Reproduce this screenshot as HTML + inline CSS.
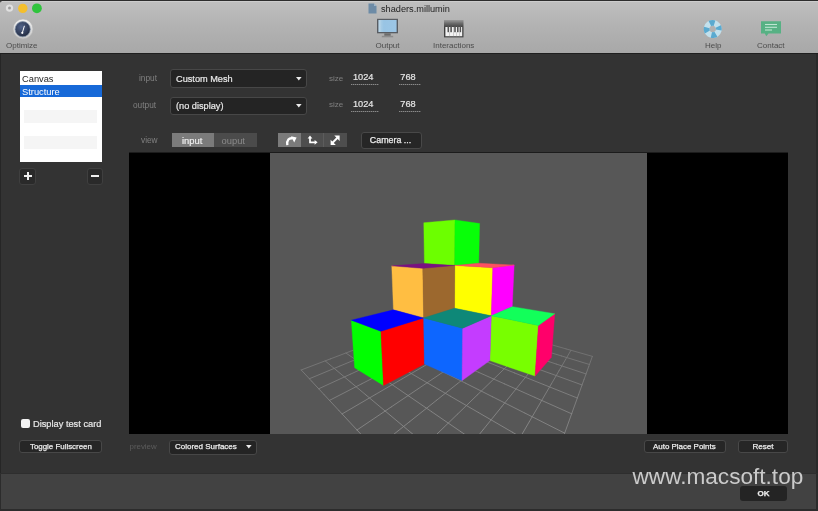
<!DOCTYPE html>
<html><head><meta charset="utf-8">
<style>
*{box-sizing:border-box;margin:0;padding:0}
html,body{width:818px;height:511px;overflow:hidden;background:#2a2a2a;font-family:"Liberation Sans",sans-serif}
.abs{position:absolute}
#win{position:absolute;left:0;top:0;width:818px;height:511px;background:#333333;overflow:hidden;filter:blur(0.35px)}
#tb{position:absolute;left:0;top:0;width:818px;height:53px;background:linear-gradient(#bfbfbf,#b3b3b3 45%,#a8a8a8);border-top:1px solid #2c2c2c;border-radius:3px 0 0 0}
#tbhi{position:absolute;left:2px;top:1px;width:816px;height:1px;background:#cccccc}
#tbline{position:absolute;left:0;top:53px;width:818px;height:1px;background:#1f1f1f}
.tl{position:absolute;top:3.5px;width:9px;height:9px;border-radius:50%}
.t{position:absolute;white-space:nowrap;line-height:1}
.tlabel{position:absolute;top:42px;font-size:8px;color:#4c4c4c;white-space:nowrap;line-height:1}
.lbl{position:absolute;font-size:8.3px;color:#808080;white-space:nowrap;line-height:1}
.sel{position:absolute;background:#242424;border:1px solid #474747;border-radius:3px}
.btn{position:absolute;background:#262626;border:1px solid #484848;border-radius:3px}
.btxt{position:absolute;color:#ececec;white-space:nowrap;line-height:1;-webkit-text-stroke:0.25px #ececec}
.w{-webkit-text-stroke:0.2px #e8e8e8}
.num{position:absolute;font-size:9.2px;color:#e6e6e6;white-space:nowrap;line-height:1;-webkit-text-stroke:0.2px #e6e6e6}
.ul{position:absolute;height:1px;background:repeating-linear-gradient(90deg,#8a8a8a 0 1px,#555 1px 2px)}
.arr{position:absolute;width:0;height:0;border-left:2.8px solid transparent;border-right:2.8px solid transparent;border-top:3px solid #e8e8e8}
</style></head><body>
<div id="win">
  <div id="tb"></div>
  <div id="tbhi"></div>
  <div id="tbline"></div>
  <!-- traffic lights -->
  <svg class="abs" style="left:0;top:0" width="48" height="16" viewBox="0 0 48 16">
    <circle cx="9.5" cy="8.1" r="3.7" fill="#e0e0e0"/>
    <circle cx="9.5" cy="8.1" r="1.5" fill="#9c9c9c"/>
    <circle cx="22.8" cy="8.4" r="4.7" fill="#f4bf2c"/>
    <circle cx="36.9" cy="8.3" r="4.9" fill="#2fc43d"/>
  </svg>
  <!-- title -->
  <svg class="abs" style="left:368px;top:3px" width="9" height="11" viewBox="0 0 9 11"><path d="M0.5 0.5H6L8.5 3V10.5H0.5Z" fill="#6d8ba6"/><path d="M6 0.5V3H8.5" fill="#9fb6c9"/></svg>
  <div class="t" style="left:381px;top:5px;font-size:9.2px;color:#1e1e1e">shaders.millumin</div>

  <!-- Optimize icon -->
  <svg class="abs" style="left:11.5px;top:17.5px" width="22" height="22" viewBox="0 0 22 22">
    <defs><radialGradient id="og" cx="0.4" cy="0.35" r="0.75"><stop offset="0" stop-color="#52648a"/><stop offset="0.6" stop-color="#323e5a"/><stop offset="1" stop-color="#1e2536"/></radialGradient>
    <linearGradient id="ring" x1="0" y1="0" x2="0" y2="1"><stop offset="0" stop-color="#f0f0f0"/><stop offset="1" stop-color="#c8c8c8"/></linearGradient></defs>
    <circle cx="11" cy="11" r="10" fill="url(#ring)" stroke="#b4b4b4" stroke-width="0.6"/>
    <circle cx="10.7" cy="11.2" r="7.6" fill="url(#og)" stroke="#8090a8" stroke-width="0.7"/>
    <path d="M10.3 14.9L12.3 8.2" stroke="#ffffff" stroke-width="1" stroke-linecap="round"/>
    <circle cx="10.3" cy="14.8" r="1.1" fill="#fff"/>
  </svg>
  <div class="tlabel" style="left:6px">Optimize</div>

  <!-- Output icon -->
  <svg class="abs" style="left:376px;top:18px" width="23" height="21" viewBox="0 0 23 21">
    <defs><linearGradient id="scr" x1="0" y1="0" x2="1" y2="0"><stop offset="0" stop-color="#b4d2e6"/><stop offset="0.3" stop-color="#98c4e4"/><stop offset="1" stop-color="#9cc6e6"/></linearGradient></defs>
    <rect x="1" y="0.8" width="21" height="14.5" fill="#585c62"/>
    <rect x="2.4" y="2" width="18.2" height="12" fill="url(#scr)"/>
    <rect x="3.6" y="2" width="0.6" height="12" fill="#c4dcea"/>
    <rect x="8.3" y="15.3" width="6.4" height="2.5" fill="#6c6c6c"/>
    <rect x="5.8" y="17.8" width="11.4" height="1.5" fill="#8c8c8c"/>
  </svg>
  <div class="tlabel" style="left:375.5px">Output</div>

  <!-- Interactions icon -->
  <svg class="abs" style="left:444.3px;top:20.2px" width="20" height="18" viewBox="0 0 20 18">
    <defs><linearGradient id="pg" x1="0" y1="0" x2="0" y2="1"><stop offset="0" stop-color="#9a9a9a"/><stop offset="0.2" stop-color="#6a6a6a"/><stop offset="0.45" stop-color="#3c3c3c"/><stop offset="1" stop-color="#444"/></linearGradient></defs>
    <rect x="0" y="0" width="19.5" height="17.4" fill="url(#pg)"/>
    <rect x="1.4" y="7" width="16.8" height="9.2" fill="#f2f2f2"/>
    <g fill="#555"><rect x="3.5" y="6" width="1.6" height="6.2"/><rect x="6.3" y="6" width="1.6" height="6.2"/><rect x="10.2" y="6" width="1.6" height="6.2"/><rect x="13" y="6" width="1.6" height="6.2"/><rect x="15.6" y="6" width="1.5" height="6.2"/></g>
    <g fill="#aaa"><rect x="5.4" y="12.2" width="0.5" height="4"/><rect x="9.1" y="7" width="0.5" height="9.2"/><rect x="12.5" y="12.2" width="0.5" height="4"/><rect x="15.2" y="12.2" width="0.5" height="4"/></g>
  </svg>
  <div class="tlabel" style="left:433px">Interactions</div>

  <!-- Help icon -->
  <svg class="abs" style="left:703px;top:18.5px" width="20" height="20" viewBox="0 0 20 20">
    <g transform="rotate(-12 9.7 10)">
    <circle cx="9.7" cy="10" r="6.1" fill="none" stroke="#c2e0ec" stroke-width="5.8"/>
    <circle cx="9.7" cy="10" r="6.1" fill="none" stroke="#5aaad0" stroke-width="5.8" stroke-dasharray="4.79 4.79" stroke-dashoffset="2.4"/>
    </g>
  </svg>
  <div class="tlabel" style="left:705px">Help</div>

  <!-- Contact icon -->
  <svg class="abs" style="left:760px;top:20px" width="22" height="18" viewBox="0 0 22 18">
    <path d="M1 1.2H21V13.5H8.5L6.3 16.3L4.8 13.5H1Z" fill="#57b184"/>
    <g stroke="#bfe6d2" stroke-width="1.1"><path d="M5 4.5H17"/><path d="M5 7.3H17"/><path d="M5 10H12"/></g>
  </svg>
  <div class="tlabel" style="left:757px">Contact</div>

  <!-- right/left window edges -->
  <div class="abs" style="left:0;top:54px;width:1px;height:457px;background:#262626"></div>
  <div class="abs" style="left:816px;top:54px;width:2px;height:457px;background:#2a2a2a"></div>

  <!-- listbox -->
  <div class="abs" style="left:20px;top:71px;width:82px;height:91px;background:#fff"></div>
  <div class="abs" style="left:20px;top:97px;width:82px;height:13px;background:#fff"></div>
  <div class="abs" style="left:24px;top:110px;width:73px;height:12.5px;background:#f5f5f5"></div>
  <div class="abs" style="left:24px;top:136px;width:73px;height:12.5px;background:#f5f5f5"></div>
  <div class="abs" style="left:20px;top:84.5px;width:82px;height:12.5px;background:#1769d8"></div>
  <div class="t" style="left:22px;top:75px;font-size:9.3px;color:#262626">Canvas</div>
  <div class="t" style="left:22px;top:88px;font-size:9.3px;color:#fff">Structure</div>

  <!-- + - buttons -->
  <div class="btn" style="left:19px;top:167.5px;width:17px;height:17px;background:#2a2a2a;border-color:#3f3f3f"></div>
  <div class="abs" style="left:24px;top:175px;width:8px;height:2.2px;background:#f0f0f0"></div>
  <div class="abs" style="left:26.9px;top:172px;width:2.2px;height:8px;background:#f0f0f0"></div>
  <div class="btn" style="left:87px;top:167.5px;width:16px;height:17px;background:#2a2a2a;border-color:#3f3f3f"></div>
  <div class="abs" style="left:90.5px;top:174.5px;width:8px;height:2.2px;background:#f0f0f0"></div>

  <!-- input/output -->
  <div class="lbl" style="left:139px;top:74px">input</div>
  <div class="lbl" style="left:133px;top:101px">output</div>
  <div class="sel" style="left:170px;top:69px;width:137px;height:19px"></div>
  <div class="t w" style="left:176px;top:75px;font-size:9.2px;color:#eaeaea">Custom Mesh</div>
  <svg class="abs" style="left:295.9px;top:76.9px" width="7" height="5" viewBox="0 0 7 5"><path d="M0 0H5.6L2.8 3.4Z" fill="#ececec"/></svg>
  <div class="sel" style="left:170px;top:96.5px;width:137px;height:18.5px"></div>
  <div class="t w" style="left:176px;top:102px;font-size:9.2px;color:#eaeaea">(no display)</div>
  <svg class="abs" style="left:295.9px;top:104.0px" width="7" height="5" viewBox="0 0 7 5"><path d="M0 0H5.6L2.8 3.4Z" fill="#ececec"/></svg>

  <div class="lbl" style="left:329px;top:74.5px;font-size:8px">size</div>
  <div class="lbl" style="left:329px;top:101px;font-size:8px">size</div>
  <div class="num" style="left:353px;top:73.3px">1024</div>
  <div class="num" style="left:400.3px;top:73.3px">768</div>
  <div class="num" style="left:353px;top:99.5px">1024</div>
  <div class="num" style="left:400.3px;top:99.5px">768</div>
  <div class="ul" style="left:351px;top:84px;width:28px"></div>
  <div class="ul" style="left:399px;top:84px;width:22px"></div>
  <div class="ul" style="left:351px;top:110.5px;width:28px"></div>
  <div class="ul" style="left:399px;top:110.5px;width:22px"></div>

  <!-- view row -->
  <div class="lbl" style="left:141px;top:135.5px">view</div>
  <div class="abs" style="left:172px;top:133px;width:42px;height:14px;background:#7b7b7b"></div>
  <div class="abs" style="left:214px;top:133px;width:42.5px;height:14px;background:#4b4b4b"></div>
  <div class="t w" style="left:182px;top:136px;font-size:9.4px;color:#f4f4f4">input</div>
  <div class="t" style="left:221.5px;top:136px;font-size:9.4px;color:#8a8a8a">ouput</div>

  <div class="abs" style="left:278px;top:133px;width:23px;height:14px;background:#7b7b7b"></div>
  <div class="abs" style="left:301px;top:133px;width:46px;height:14px;background:#4e4e4e"></div>
  <div class="abs" style="left:322.5px;top:133px;width:0.6px;height:14px;background:#5c5c5c"></div>
  <svg class="abs" style="left:278px;top:133px" width="69" height="14" viewBox="0 0 69 14">
    <path d="M9.3 12.2C8.6 7 11 4.6 14.8 5.4" fill="none" stroke="#fff" stroke-width="2.3"/>
    <path d="M13 3.2L18.6 4.6L16.2 9.4Z" fill="#fff"/>
    <path d="M32 4V9.3H37" fill="none" stroke="#fff" stroke-width="1.7"/>
    <path d="M29.6 5.4L32 2.4L34.4 5.4Z" fill="#fff"/>
    <path d="M36.6 6.9L39.6 9.3L36.6 11.7Z" fill="#fff"/>
    <path d="M54.5 9.8L59.5 4.8" stroke="#fff" stroke-width="2"/>
    <path d="M56.3 2.6H61.6V7.9Z" fill="#fff"/>
    <path d="M52.6 6.8V12H57.8Z" fill="#fff"/>
  </svg>

  <div class="btn" style="left:360.5px;top:131.5px;width:61px;height:17px"></div>
  <div class="btxt" style="left:369.8px;top:136px;font-size:8.9px">Camera ...</div>

  <!-- viewport -->
  <div class="abs" style="left:129px;top:152px;width:659px;height:282px;background:#000"></div>
  <div class="abs" style="left:129px;top:152px;width:659px;height:1px;background:#1c1c1c"></div>
  <div class="abs" style="left:270px;top:153px;width:377px;height:281px;background:#575757"></div>
  <!--SCENE--><svg class="abs" style="left:270px;top:153px" width="377" height="281" viewBox="0 0 377 281"><g stroke-width="0.85" stroke-linecap="round" fill="none"><line stroke="#7a7a7a" x1="31.20" y1="216.96" x2="60.63" y2="205.80"/><line stroke="#797979" x1="60.63" y1="205.80" x2="85.27" y2="196.46"/><line stroke="#777777" x1="85.27" y1="196.46" x2="106.19" y2="188.53"/><line stroke="#757575" x1="106.19" y1="188.53" x2="124.17" y2="181.72"/><line stroke="#727272" x1="124.17" y1="181.72" x2="139.81" y2="175.79"/><line stroke="#707070" x1="139.81" y1="175.79" x2="153.51" y2="170.60"/><line stroke="#6d6d6d" x1="153.51" y1="170.60" x2="165.64" y2="166.00"/><line stroke="#6a6a6a" x1="165.64" y1="166.00" x2="176.43" y2="161.91"/><line stroke="#7d7d7d" x1="39.36" y1="225.74" x2="69.82" y2="213.08"/><line stroke="#7c7c7c" x1="69.82" y1="213.08" x2="95.03" y2="202.60"/><line stroke="#7a7a7a" x1="95.03" y1="202.60" x2="116.25" y2="193.77"/><line stroke="#787878" x1="116.25" y1="193.77" x2="134.35" y2="186.25"/><line stroke="#757575" x1="134.35" y1="186.25" x2="149.97" y2="179.75"/><line stroke="#727272" x1="149.97" y1="179.75" x2="163.60" y2="174.09"/><line stroke="#6f6f6f" x1="163.60" y1="174.09" x2="175.59" y2="169.11"/><line stroke="#6c6c6c" x1="175.59" y1="169.11" x2="186.21" y2="164.69"/><line stroke="#808080" x1="48.70" y1="235.78" x2="80.19" y2="221.30"/><line stroke="#7f7f7f" x1="80.19" y1="221.30" x2="105.94" y2="209.45"/><line stroke="#7d7d7d" x1="105.94" y1="209.45" x2="127.39" y2="199.58"/><line stroke="#7a7a7a" x1="127.39" y1="199.58" x2="145.54" y2="191.23"/><line stroke="#777777" x1="145.54" y1="191.23" x2="161.08" y2="184.08"/><line stroke="#757575" x1="161.08" y1="184.08" x2="174.56" y2="177.88"/><line stroke="#717171" x1="174.56" y1="177.88" x2="186.34" y2="172.46"/><line stroke="#6e6e6e" x1="186.34" y1="172.46" x2="196.74" y2="167.68"/><line stroke="#838383" x1="59.49" y1="247.39" x2="92.00" y2="230.65"/><line stroke="#828282" x1="92.00" y1="230.65" x2="118.22" y2="217.16"/><line stroke="#7f7f7f" x1="118.22" y1="217.16" x2="139.81" y2="206.05"/><line stroke="#7d7d7d" x1="139.81" y1="206.05" x2="157.90" y2="196.74"/><line stroke="#7a7a7a" x1="157.90" y1="196.74" x2="173.27" y2="188.83"/><line stroke="#777777" x1="173.27" y1="188.83" x2="186.50" y2="182.02"/><line stroke="#737373" x1="186.50" y1="182.02" x2="198.00" y2="176.10"/><line stroke="#707070" x1="198.00" y1="176.10" x2="208.09" y2="170.90"/><line stroke="#868686" x1="72.09" y1="260.94" x2="105.57" y2="241.40"/><line stroke="#848484" x1="105.57" y1="241.40" x2="132.13" y2="225.90"/><line stroke="#828282" x1="132.13" y1="225.90" x2="153.73" y2="213.30"/><line stroke="#7f7f7f" x1="153.73" y1="213.30" x2="171.62" y2="202.85"/><line stroke="#7c7c7c" x1="171.62" y1="202.85" x2="186.70" y2="194.06"/><line stroke="#797979" x1="186.70" y1="194.06" x2="199.57" y2="186.54"/><line stroke="#757575" x1="199.57" y1="186.54" x2="210.69" y2="180.05"/><line stroke="#727272" x1="210.69" y1="180.05" x2="220.39" y2="174.39"/><line stroke="#898989" x1="87.00" y1="276.99" x2="121.32" y2="253.88"/><line stroke="#878787" x1="121.32" y1="253.88" x2="148.04" y2="235.89"/><line stroke="#848484" x1="148.04" y1="235.89" x2="169.44" y2="221.48"/><line stroke="#818181" x1="169.44" y1="221.48" x2="186.96" y2="209.68"/><line stroke="#7e7e7e" x1="186.96" y1="209.68" x2="201.56" y2="199.85"/><line stroke="#7b7b7b" x1="201.56" y1="199.85" x2="213.93" y2="191.52"/><line stroke="#777777" x1="213.93" y1="191.52" x2="224.54" y2="184.38"/><line stroke="#737373" x1="224.54" y1="184.38" x2="233.73" y2="178.18"/><line stroke="#8b8b8b" x1="104.93" y1="296.27" x2="139.82" y2="268.54"/><line stroke="#898989" x1="139.82" y1="268.54" x2="166.39" y2="247.41"/><line stroke="#868686" x1="166.39" y1="247.41" x2="187.30" y2="230.79"/><line stroke="#838383" x1="187.30" y1="230.79" x2="204.19" y2="217.36"/><line stroke="#808080" x1="204.19" y1="217.36" x2="218.12" y2="206.29"/><line stroke="#7c7c7c" x1="218.12" y1="206.29" x2="229.79" y2="197.01"/><line stroke="#797979" x1="229.79" y1="197.01" x2="239.73" y2="189.11"/><line stroke="#757575" x1="239.73" y1="189.11" x2="248.28" y2="182.32"/><line stroke="#8d8d8d" x1="126.89" y1="319.89" x2="161.86" y2="286.00"/><line stroke="#8b8b8b" x1="161.86" y1="286.00" x2="187.80" y2="260.86"/><line stroke="#888888" x1="187.80" y1="260.86" x2="207.81" y2="241.47"/><line stroke="#858585" x1="207.81" y1="241.47" x2="223.72" y2="226.06"/><line stroke="#818181" x1="223.72" y1="226.06" x2="236.66" y2="213.51"/><line stroke="#7e7e7e" x1="236.66" y1="213.51" x2="247.40" y2="203.11"/><line stroke="#7a7a7a" x1="247.40" y1="203.11" x2="256.46" y2="194.33"/><line stroke="#767676" x1="256.46" y1="194.33" x2="264.19" y2="186.83"/><line stroke="#8f8f8f" x1="154.40" y1="349.49" x2="188.57" y2="307.16"/><line stroke="#8d8d8d" x1="188.57" y1="307.16" x2="213.11" y2="276.75"/><line stroke="#8a8a8a" x1="213.11" y1="276.75" x2="231.59" y2="253.86"/><line stroke="#868686" x1="231.59" y1="253.86" x2="246.01" y2="235.99"/><line stroke="#838383" x1="246.01" y1="235.99" x2="257.58" y2="221.66"/><line stroke="#7f7f7f" x1="257.58" y1="221.66" x2="267.06" y2="209.91"/><line stroke="#7b7b7b" x1="267.06" y1="209.91" x2="274.97" y2="200.11"/><line stroke="#777777" x1="274.97" y1="200.11" x2="281.68" y2="191.80"/><line stroke="#919191" x1="189.90" y1="387.68" x2="221.60" y2="333.33"/><line stroke="#8e8e8e" x1="221.60" y1="333.33" x2="243.48" y2="295.83"/><line stroke="#8b8b8b" x1="243.48" y1="295.83" x2="259.49" y2="268.39"/><line stroke="#878787" x1="259.49" y1="268.39" x2="271.71" y2="247.44"/><line stroke="#848484" x1="271.71" y1="247.44" x2="281.35" y2="230.92"/><line stroke="#808080" x1="281.35" y1="230.92" x2="289.14" y2="217.56"/><line stroke="#7c7c7c" x1="289.14" y1="217.56" x2="295.57" y2="206.54"/><line stroke="#787878" x1="295.57" y1="206.54" x2="300.97" y2="197.28"/><line stroke="#929292" x1="237.43" y1="438.81" x2="263.51" y2="366.54"/><line stroke="#8f8f8f" x1="263.51" y1="366.54" x2="280.60" y2="319.15"/><line stroke="#8c8c8c" x1="280.60" y1="319.15" x2="292.68" y2="285.68"/><line stroke="#888888" x1="292.68" y1="285.68" x2="301.66" y2="260.78"/><line stroke="#848484" x1="301.66" y1="260.78" x2="308.60" y2="241.54"/><line stroke="#808080" x1="308.60" y1="241.54" x2="314.13" y2="226.22"/><line stroke="#7c7c7c" x1="314.13" y1="226.22" x2="318.64" y2="213.73"/><line stroke="#787878" x1="318.64" y1="213.73" x2="322.38" y2="203.36"/><line stroke="#7d7d7d" x1="31.20" y1="216.96" x2="41.58" y2="228.12"/><line stroke="#818181" x1="41.58" y1="228.12" x2="53.89" y2="241.37"/><line stroke="#848484" x1="53.89" y1="241.37" x2="68.75" y2="257.35"/><line stroke="#888888" x1="68.75" y1="257.35" x2="87.00" y2="276.99"/><line stroke="#8b8b8b" x1="87.00" y1="276.99" x2="109.99" y2="301.72"/><line stroke="#8e8e8e" x1="109.99" y1="301.72" x2="139.82" y2="333.81"/><line stroke="#909090" x1="139.82" y1="333.81" x2="180.09" y2="377.13"/><line stroke="#929292" x1="180.09" y1="377.13" x2="237.43" y2="438.81"/><line stroke="#7c7c7c" x1="55.17" y1="207.87" x2="66.63" y2="217.45"/><line stroke="#808080" x1="66.63" y1="217.45" x2="80.04" y2="228.67"/><line stroke="#838383" x1="80.04" y1="228.67" x2="95.96" y2="241.98"/><line stroke="#878787" x1="95.96" y1="241.98" x2="115.15" y2="258.03"/><line stroke="#8a8a8a" x1="115.15" y1="258.03" x2="138.76" y2="277.77"/><line stroke="#8c8c8c" x1="138.76" y1="277.77" x2="168.49" y2="302.63"/><line stroke="#8f8f8f" x1="168.49" y1="302.63" x2="207.08" y2="334.90"/><line stroke="#909090" x1="207.08" y1="334.90" x2="259.20" y2="378.48"/><line stroke="#7b7b7b" x1="75.91" y1="200.01" x2="88.05" y2="208.32"/><line stroke="#7e7e7e" x1="88.05" y1="208.32" x2="102.11" y2="217.94"/><line stroke="#828282" x1="102.11" y1="217.94" x2="118.56" y2="229.21"/><line stroke="#858585" x1="118.56" y1="229.21" x2="138.09" y2="242.58"/><line stroke="#888888" x1="138.09" y1="242.58" x2="161.65" y2="258.72"/><line stroke="#8a8a8a" x1="161.65" y1="258.72" x2="190.63" y2="278.55"/><line stroke="#8c8c8c" x1="190.63" y1="278.55" x2="227.13" y2="303.55"/><line stroke="#8e8e8e" x1="227.13" y1="303.55" x2="274.52" y2="336.00"/><line stroke="#797979" x1="94.03" y1="193.14" x2="106.59" y2="200.43"/><line stroke="#7d7d7d" x1="106.59" y1="200.43" x2="120.98" y2="208.78"/><line stroke="#808080" x1="120.98" y1="208.78" x2="137.63" y2="218.44"/><line stroke="#838383" x1="137.63" y1="218.44" x2="157.14" y2="229.76"/><line stroke="#868686" x1="157.14" y1="229.76" x2="180.30" y2="243.19"/><line stroke="#888888" x1="180.30" y1="243.19" x2="208.23" y2="259.40"/><line stroke="#8a8a8a" x1="208.23" y1="259.40" x2="242.60" y2="279.34"/><line stroke="#8b8b8b" x1="242.60" y1="279.34" x2="285.90" y2="304.46"/><line stroke="#777777" x1="110.00" y1="187.09" x2="122.78" y2="193.53"/><line stroke="#7b7b7b" x1="122.78" y1="193.53" x2="137.30" y2="200.84"/><line stroke="#7e7e7e" x1="137.30" y1="200.84" x2="153.94" y2="209.23"/><line stroke="#818181" x1="153.94" y1="209.23" x2="173.21" y2="218.94"/><line stroke="#838383" x1="173.21" y1="218.94" x2="195.78" y2="230.31"/><line stroke="#868686" x1="195.78" y1="230.31" x2="222.58" y2="243.80"/><line stroke="#878787" x1="222.58" y1="243.80" x2="254.90" y2="260.09"/><line stroke="#898989" x1="254.90" y1="260.09" x2="294.68" y2="280.13"/><line stroke="#757575" x1="124.17" y1="181.72" x2="137.05" y2="187.45"/><line stroke="#797979" x1="137.05" y1="187.45" x2="151.56" y2="193.92"/><line stroke="#7c7c7c" x1="151.56" y1="193.92" x2="168.05" y2="201.26"/><line stroke="#7e7e7e" x1="168.05" y1="201.26" x2="186.96" y2="209.68"/><line stroke="#818181" x1="186.96" y1="209.68" x2="208.84" y2="219.43"/><line stroke="#838383" x1="208.84" y1="219.43" x2="234.48" y2="230.85"/><line stroke="#858585" x1="234.48" y1="230.85" x2="264.92" y2="244.41"/><line stroke="#868686" x1="264.92" y1="244.41" x2="301.66" y2="260.78"/><line stroke="#737373" x1="136.85" y1="176.91" x2="149.71" y2="182.05"/><line stroke="#767676" x1="149.71" y1="182.05" x2="164.12" y2="187.81"/><line stroke="#797979" x1="164.12" y1="187.81" x2="180.37" y2="194.30"/><line stroke="#7c7c7c" x1="180.37" y1="194.30" x2="198.84" y2="201.68"/><line stroke="#7e7e7e" x1="198.84" y1="201.68" x2="220.01" y2="210.14"/><line stroke="#808080" x1="220.01" y1="210.14" x2="244.52" y2="219.93"/><line stroke="#828282" x1="244.52" y1="219.93" x2="273.24" y2="231.40"/><line stroke="#838383" x1="273.24" y1="231.40" x2="307.35" y2="245.03"/><line stroke="#717171" x1="148.24" y1="172.60" x2="161.03" y2="177.23"/><line stroke="#747474" x1="161.03" y1="177.23" x2="175.27" y2="182.39"/><line stroke="#777777" x1="175.27" y1="182.39" x2="191.23" y2="188.17"/><line stroke="#797979" x1="191.23" y1="188.17" x2="209.22" y2="194.69"/><line stroke="#7b7b7b" x1="209.22" y1="194.69" x2="229.67" y2="202.10"/><line stroke="#7d7d7d" x1="229.67" y1="202.10" x2="253.11" y2="210.59"/><line stroke="#7f7f7f" x1="253.11" y1="210.59" x2="280.26" y2="220.43"/><line stroke="#808080" x1="280.26" y1="220.43" x2="312.06" y2="231.95"/><line stroke="#6f6f6f" x1="158.54" y1="168.69" x2="171.21" y2="172.89"/><line stroke="#717171" x1="171.21" y1="172.89" x2="185.24" y2="177.55"/><line stroke="#747474" x1="185.24" y1="177.55" x2="200.86" y2="182.73"/><line stroke="#767676" x1="200.86" y1="182.73" x2="218.36" y2="188.53"/><line stroke="#797979" x1="218.36" y1="188.53" x2="238.10" y2="195.08"/><line stroke="#7a7a7a" x1="238.10" y1="195.08" x2="260.53" y2="202.52"/><line stroke="#7c7c7c" x1="260.53" y1="202.52" x2="286.25" y2="211.05"/><line stroke="#7d7d7d" x1="286.25" y1="211.05" x2="316.04" y2="220.93"/><line stroke="#6c6c6c" x1="167.89" y1="165.15" x2="180.41" y2="168.97"/><line stroke="#6f6f6f" x1="180.41" y1="168.97" x2="194.20" y2="173.19"/><line stroke="#717171" x1="194.20" y1="173.19" x2="209.48" y2="177.87"/><line stroke="#747474" x1="209.48" y1="177.87" x2="226.48" y2="183.07"/><line stroke="#767676" x1="226.48" y1="183.07" x2="245.53" y2="188.90"/><line stroke="#777777" x1="245.53" y1="188.90" x2="267.01" y2="195.47"/><line stroke="#787878" x1="267.01" y1="195.47" x2="291.44" y2="202.94"/><line stroke="#797979" x1="291.44" y1="202.94" x2="319.44" y2="211.50"/><line stroke="#6a6a6a" x1="176.43" y1="161.91" x2="188.77" y2="165.41"/><line stroke="#6c6c6c" x1="188.77" y1="165.41" x2="202.30" y2="169.26"/><line stroke="#6e6e6e" x1="202.30" y1="169.26" x2="217.22" y2="173.49"/><line stroke="#717171" x1="217.22" y1="173.49" x2="233.73" y2="178.18"/><line stroke="#727272" x1="233.73" y1="178.18" x2="252.12" y2="183.41"/><line stroke="#747474" x1="252.12" y1="183.41" x2="272.72" y2="189.26"/><line stroke="#757575" x1="272.72" y1="189.26" x2="295.96" y2="195.86"/><line stroke="#767676" x1="295.96" y1="195.86" x2="322.38" y2="203.36"/></g><polygon fill="#6cff00" stroke="#6cff00" stroke-width="0.4" points="184.75,112.43 154.43,110.54 153.78,69.77 184.99,66.95"/><polygon fill="#08ff08" stroke="#08ff08" stroke-width="0.4" points="184.75,112.43 208.73,110.24 209.61,70.54 184.99,66.95"/><polygon fill="#ffff00" stroke="#ffff00" stroke-width="0.4" points="221.29,162.77 184.53,155.19 184.75,112.43 222.82,114.81"/><polygon fill="#ff00ff" stroke="#ff00ff" stroke-width="0.4" points="221.29,162.77 242.22,153.63 244.17,112.04 222.82,114.81"/><polygon fill="#ff5060" stroke="#ff5060" stroke-width="0.4" points="222.82,114.81 184.75,112.43 208.73,110.24 244.17,112.04"/><polygon fill="#ffbe42" stroke="#ffbe42" stroke-width="0.4" points="153.63,164.89 123.45,156.85 121.74,112.85 152.78,115.36"/><polygon fill="#9c682e" stroke="#9c682e" stroke-width="0.4" points="153.63,164.89 184.53,155.19 184.75,112.43 152.78,115.36"/><polygon fill="#7a1080" stroke="#7a1080" stroke-width="0.4" points="152.78,115.36 121.74,112.85 154.43,110.54 184.75,112.43"/><polygon fill="#78ff00" stroke="#78ff00" stroke-width="0.4" points="265.05,223.06 219.86,207.62 221.29,162.77 268.42,172.49"/><polygon fill="#ff006a" stroke="#ff006a" stroke-width="0.4" points="265.05,223.06 281.36,204.34 284.75,160.78 268.42,172.49"/><polygon fill="#12ff5a" stroke="#12ff5a" stroke-width="0.4" points="268.42,172.49 221.29,162.77 242.22,153.63 284.75,160.78"/><polygon fill="#00ff00" stroke="#00ff00" stroke-width="0.4" points="113.53,232.47 84.66,214.81 81.34,167.15 110.90,178.30"/><polygon fill="#ff0000" stroke="#ff0000" stroke-width="0.4" points="113.53,232.47 154.42,211.10 153.63,164.89 110.90,178.30"/><polygon fill="#0000ff" stroke="#0000ff" stroke-width="0.4" points="110.90,178.30 81.34,167.15 123.45,156.85 153.63,164.89"/><polygon fill="#0d66ff" stroke="#0d66ff" stroke-width="0.4" points="192.06,227.60 154.42,211.10 153.63,164.89 192.65,175.28"/><polygon fill="#c43cff" stroke="#c43cff" stroke-width="0.4" points="192.06,227.60 219.86,207.62 221.29,162.77 192.65,175.28"/><polygon fill="#0e8878" stroke="#0e8878" stroke-width="0.4" points="192.65,175.28 153.63,164.89 184.53,155.19 221.29,162.77"/></svg><!--/SCENE-->

  <!-- left bottom -->
  <div class="abs" style="left:20.5px;top:419px;width:9px;height:9px;background:#f4f4f4;border-radius:2px"></div>
  <div class="t w" style="left:33px;top:419.5px;font-size:9.25px;color:#e8e8e8">Display test card</div>
  <div class="btn" style="left:19px;top:440px;width:83px;height:13px"></div>
  <div class="btxt" style="left:30px;top:443px;font-size:7.9px;font-weight:normal">Toggle Fullscreen</div>

  <div class="lbl" style="left:129.5px;top:443px;font-size:7.9px;color:#5c5c5c">preview</div>
  <div class="sel" style="left:169px;top:439.5px;width:87.5px;height:15px"></div>
  <div class="btxt" style="left:175px;top:443px;font-size:8px">Colored Surfaces</div>
  <svg class="abs" style="left:246.0px;top:445.3px" width="7" height="5" viewBox="0 0 7 5"><path d="M0 0H5.6L2.8 3.4Z" fill="#ececec"/></svg>

  <div class="btn" style="left:643.5px;top:440px;width:82px;height:13px"></div>
  <div class="btxt" style="left:653px;top:442.5px;font-size:7.95px">Auto Place Points</div>
  <div class="btn" style="left:737.5px;top:440px;width:50.5px;height:13px"></div>
  <div class="btxt" style="left:752.4px;top:442.5px;font-size:8.1px">Reset</div>

  <!-- bottom bar -->
  <div class="abs" style="left:0;top:474px;width:818px;height:37px;background:#424242"></div>
  <div class="abs" style="left:0;top:473px;width:818px;height:1px;background:#2e2e2e"></div>
  <div class="abs" style="left:0;top:509px;width:818px;height:2px;background:#2c2c2c"></div>
  <div class="abs" style="left:0;top:474px;width:1px;height:37px;background:#2c2c2c"></div>
  <div class="abs" style="left:816px;top:474px;width:2px;height:37px;background:#2c2c2c"></div>
  <div class="abs" style="left:740px;top:486px;width:47px;height:15px;background:#242424;border-radius:3px"></div>
  <div class="btxt" style="left:757.5px;top:490px;font-size:8px;font-weight:bold">OK</div>
  <div class="t" style="left:632.5px;top:466px;font-size:22.6px;color:rgba(222,222,222,0.88)">www.macsoft.top</div>
</div>
</body></html>
